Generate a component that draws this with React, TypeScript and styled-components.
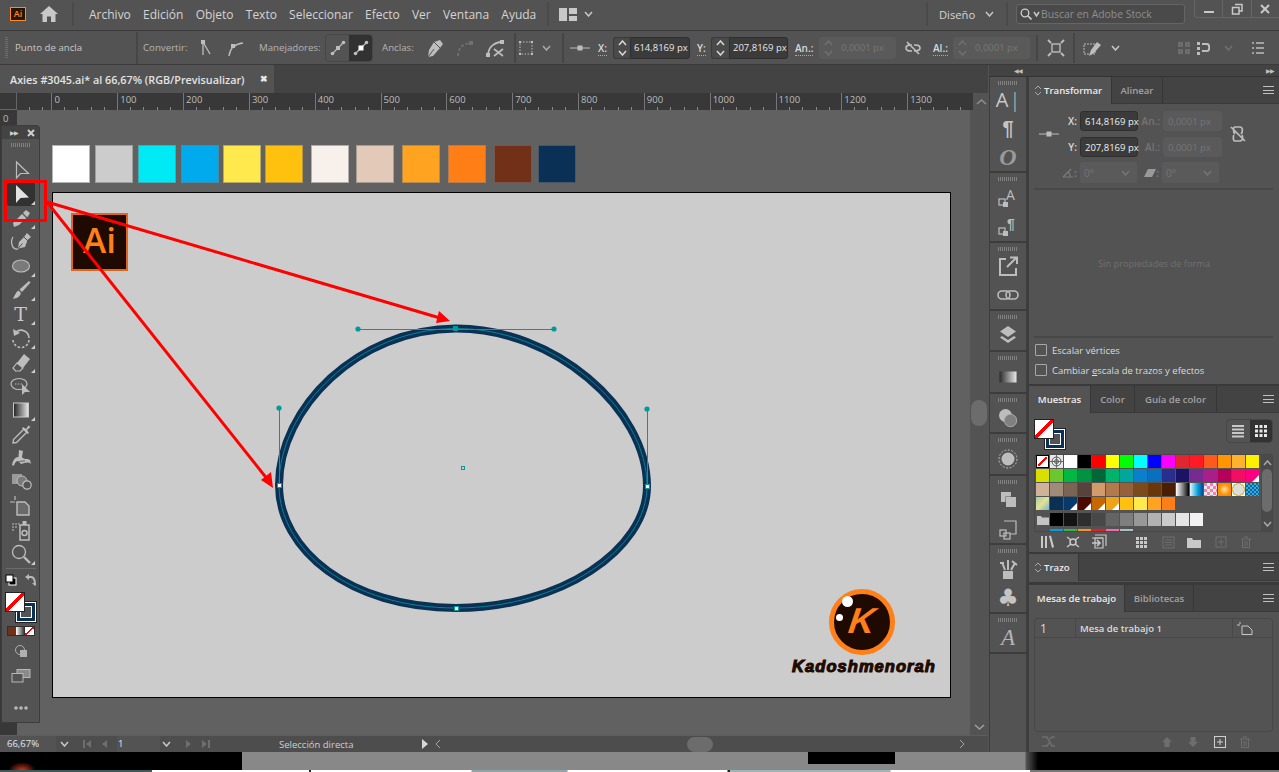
import React from "react";
import styled, { createGlobalStyle } from "styled-components";

const Global = createGlobalStyle`
  html, body { margin: 0; padding: 0; background: #000; overflow: hidden; }
  * { box-sizing: border-box; }
  #root { width: 1279px; height: 772px; }
`;

const FONT = `"Open Sans", "Noto Sans", sans-serif`;

const Screen = styled.div`
  position: relative; width: 1279px; height: 772px; overflow: hidden;
  display: flex; flex-direction: column; font-family: ${FONT}; font-size: 11px; color: #d6d6d6; background: #535353;
`;

/* ---------- generic icon parts ---------- */
const Ico = styled.svg<{ $c?: string }>`
  display: block; flex: none; color: ${(p) => p.$c || "#c4c4c4"};
`;
const I = ({ s = 24, h, c, v, children }: { s?: number; h?: number; c?: string; v?: string; children: React.ReactNode }) => (
  <Ico width={s} height={h || s} viewBox={v || `0 0 ${s} ${h || s}`} $c={c} fill="none" stroke="none">{children}</Ico>
);
const Slot = styled.div<{ $w: number }>`
  width: ${(p) => p.$w}px; flex: none; display: flex; align-items: center; justify-content: center; height: 100%;
`;
const Gap = styled.div<{ $w: number }>`
  width: ${(p) => p.$w}px; flex: none;
`;
const Chev = ({ c = "#c8c8c8", s = 9, up = false }: { c?: string; s?: number; up?: boolean }) => (
  <I s={s} h={6} c={c}><path d={up ? `M1 5 L${s / 2} 1 L${s - 1} 5` : `M1 1 L${s / 2} 5 L${s - 1} 1`} stroke="currentColor" strokeWidth="1.5" /></I>
);

/* ---------- menu bar ---------- */
const MenuBar = styled.div`
  height: 31px; flex: none; display: flex; align-items: center; background: #535353; border-bottom: 1px solid #3a3a3a; position: relative; padding-bottom: 2px;
`;
const AppLogo = styled.div`
  width: 16px; height: 14px; margin-left: 10px; background: #2a1400; border: 1px solid #ff8a1e; color: #ff8a1e;
  font-size: 9px; line-height: 12px; text-align: center; font-weight: 600; flex: none;
`;
const Divider = styled.div<{ $h?: number; $c?: string }>`
  width: 2px; flex: none; height: ${(p) => p.$h || 24}px; background: ${(p) => p.$c || "#4a4a4a"};
`;
const MenuList = styled.div`
  display: flex; gap: 12.2px; font-size: 12px; color: #d4d4d4; width: 456px; flex: none;
`;
const SearchBox = styled.div`
  width: 169px; height: 20px; flex: none; border: 1px solid #656565; border-radius: 3px; background: #4a4a4a; display: flex; align-items: center;
  padding-left: 3px; gap: 1px; font-size: 10.4px; color: #8e8e8e; white-space: nowrap;
`;
const WindowButtons = styled.div`
  position: absolute; left: 1194px; top: 0; width: 85px; height: 18px; display: flex; border: 1px solid #656565; border-top: 0; border-right: 0; border-bottom-left-radius: 3px;
`;
const WinBtn = styled.div`
  flex: 1; display: flex; align-items: center; justify-content: center; border-left: 1px solid #656565;
  &:first-child { border-left: 0; }
`;
const DesignLabel = styled.div`
  font-size: 11.2px; color: #d4d4d4; width: 43px; flex: none;
`;

/* ---------- control bar ---------- */
const ControlBar = styled.div`
  height: 34px; flex: none; display: flex; align-items: center; padding-left: 5px; background: #535353; border-bottom: 1px solid #3a3a3a;
`;
const GripV = styled.div`
  width: 3px; height: 22px; flex: none;
  background: repeating-linear-gradient(to bottom, #6d6d6d 0 1px, transparent 1px 2px);
`;
const CtlText = styled.div<{ $w: number; $dim?: boolean }>`
  width: ${(p) => p.$w}px; flex: none; font-size: 9.7px; color: ${(p) => (p.$dim ? "#b4b4b4" : "#c8c8c8")}; white-space: nowrap;
`;
const ScrubLabel = styled.div<{ $w: number }>`
  width: ${(p) => p.$w}px; flex: none; font-size: 10px; font-weight: 600; color: #d8d8d8; span { border-bottom: 1px dotted #aaa; }
`;
const HandleGroup = styled.div`
  width: 48px; height: 28px; flex: none; display: flex; border: 1px solid #464646; border-radius: 4px; overflow: hidden;
`;
const HandleBtn = styled.div<{ $on?: boolean }>`
  flex: 1; display: flex; align-items: center; justify-content: center; background: ${(p) => (p.$on ? "#323232" : "transparent")};
`;
const NumBox = styled.div<{ $w: number; $off?: boolean }>`
  width: ${(p) => p.$w}px; height: 22px; flex: none; display: flex; align-items: center;
  background: ${(p) => (p.$off ? "#5a5a5a" : "#3b3b3b")}; border: 1px solid ${(p) => (p.$off ? "#5a5a5a" : "#2f2f2f")};
  border-radius: 0 3px 3px 0; padding-left: 3px; font-size: 9.5px; white-space: nowrap;
  color: ${(p) => (p.$off ? "#777" : "#e8e8e8")};
`;
const Stepper = styled.div<{ $w: number; $off?: boolean }>`
  width: ${(p) => p.$w}px; height: 22px; flex: none; display: flex; flex-direction: column; align-items: center; justify-content: center; gap: 4px;
  background: ${(p) => (p.$off ? "#5a5a5a" : "#4a4a4a")}; border: 1px solid ${(p) => (p.$off ? "#5a5a5a" : "#3a3a3a")}; border-right: 0; border-radius: 3px 0 0 3px;
`;
const Step = ({ w, off }: { w: number; off?: boolean }) => (
  <Stepper $w={w} $off={off}><Chev up c={off ? "#707070" : "#d8d8d8"} /><Chev c={off ? "#707070" : "#d8d8d8"} /></Stepper>
);

/* ---------- workspace ---------- */
const Workspace = styled.div`
  flex: 1; min-height: 0; display: flex;
`;
const DocArea = styled.div`
  width: 988px; flex: none; display: flex; flex-direction: column;
`;
const TabRow = styled.div`
  height: 28px; flex: none; background: #434343; display: flex;
`;
const DocTab = styled.div`
  width: 274px; background: #535353; display: flex; align-items: center; padding-left: 10px; font-size: 10.8px; font-weight: 600; color: #e4e4e4; white-space: nowrap; position: relative;
`;
const CloseMark = styled.span`
  position: absolute; left: 260px; top: 7px; font-size: 9px; font-weight: 700; color: #e8e8e8;
`;
const RulerRow = styled.div`
  height: 17px; flex: none; display: flex; background: #383838;
`;
const RulerOrigin = styled.div`
  width: 17px; flex: none; height: 100%; position: relative; border-right: 1px solid #666; border-bottom: 1px solid #666;
`;
const RulerLead = styled.div`
  width: 34.4px; flex: none; background: repeating-linear-gradient(to right, transparent 0 12px, #8a8a8a 12px 13px) bottom left / 100% 3px no-repeat;
`;
const RulerCell = styled.div`
  width: 65.84px; flex: none; height: 100%; border-left: 1px solid #777; padding-left: 2px; font-size: 9.5px; line-height: 13px; color: #bdbdbd;
  background: repeating-linear-gradient(to right, transparent 0 12.17px, #8a8a8a 12.17px 13.17px) bottom left / 100% 3px no-repeat;
`;
const ScrollCorner = styled.div`
  width: 18px; flex: none; background: #535353; display: flex; align-items: center; justify-content: center;
`;
const CanvasRow = styled.div`
  flex: 1; min-height: 0; display: flex;
`;
const VRuler = styled.div`
  width: 17px; flex: none; background: #383838; font-size: 9.5px; padding: 2px 0 0 3px; color: #bdbdbd;
`;
const Canvas = styled.div`
  flex: 1; position: relative; background: #616161;
`;
const SwatchRow = styled.div`
  position: absolute; left: 35px; top: 35px; display: flex;
`;
const DocSwatch = styled.div<{ $c: string; $ml: number }>`
  width: 38px; height: 38px; margin-left: ${(p) => p.$ml}px; background: ${(p) => p.$c}; border: 1px solid rgba(120,120,120,.55);
`;
const Artboard = styled.div`
  position: absolute; left: 35px; top: 82px; width: 899px; height: 506px; background: #cccccc; border: 1px solid #000;
`;
const AiBadge = styled.div`
  position: absolute; left: 18px; top: 20px; width: 57px; height: 58px; background: #1e0a00; border: 2px solid #e0651f;
  color: #ff7f18; font-size: 35px; line-height: 50px; text-align: center; font-weight: 600;
`;
const KLogo = styled.div`
  position: absolute; left: 776px; top: 396px; width: 66px; height: 66px; border-radius: 50%; background: #1e0a00; border: 5px solid #ff7f18;
  color: #ff7f18; font: italic 700 36px/54px "Liberation Sans", sans-serif; text-align: center;
`;
const KGlyph = styled.span`
  display: inline-block; transform: skewX(-8deg);
`;
const KDot = styled.i<{ $x: number; $y: number; $d: number }>`
  position: absolute; left: ${(p) => p.$x}px; top: ${(p) => p.$y}px; width: ${(p) => p.$d}px; height: ${(p) => p.$d}px; border-radius: 50%; background: #fff;
`;
const KName = styled.div`
  position: absolute; left: 738px; top: 464px; width: 146px; text-align: center; color: #1e0a00; white-space: nowrap;
  font: italic 900 16.5px/18px "Liberation Sans", sans-serif; -webkit-text-stroke: 1.1px #1e0a00; letter-spacing: 1.05px;
`;
const VScroll = styled.div`
  width: 18px; flex: none; background: #535353; position: relative; display: flex; flex-direction: column; align-items: center; justify-content: flex-end; padding-bottom: 5px;
`;
const VThumb = styled.div`
  position: absolute; left: 1px; top: 290px; width: 16px; height: 26px; border-radius: 8px; background: #6c6c6c;
`;

/* ---------- status bar ---------- */
const StatusBar = styled.div`
  height: 17px; flex: none; display: flex; align-items: center; background: #4d4d4d; font-size: 9.5px; color: #d0d0d0; border-top: 1px solid #5d5d5d;
`;
const StatusField = styled.div<{ $w: number; $pad: number }>`
  width: ${(p) => p.$w}px; flex: none; height: 100%; background: #535353; padding-left: ${(p) => p.$pad}px; line-height: 16px; color: #e0e8f4; white-space: nowrap;
`;
const StatusMsg = styled.div`
  width: 197px; flex: none; padding-left: 60px; white-space: nowrap; color: #cfcfcf;
`;
const HThumb = styled.div`
  width: 26px; height: 15px; border-radius: 8px; background: #6c6c6c; flex: none;
`;

/* ---------- bottom strip ---------- */
const Bottom = styled.div`
  height: 20px; flex: none; position: relative; background: linear-gradient(to right, #000 0 242px, #888 242px 1025px, #555 1026px, #000 1038px);
`;
const BottomCut = styled.div`
  position: absolute; left: 808px; top: 0; width: 87px; height: 12px; background: #000;
`;
const BottomEdge = styled.div`
  position: absolute; left: 0; right: 0; bottom: 0; height: 2px;
  background: linear-gradient(to right, #3c5a58 0 152px, #fff 152px 309px, #222 309px 311px, #fff 311px 471px, #8fa5a8 472px 567px, #fff 568px 727px, #222 728px 730px, #9fb5b5 730px 890px, #fff 891px 1030px, #777 1030px 1279px);
`;
const Glow = styled.div`
  position: absolute; left: 8px; bottom: -8px; width: 28px; height: 18px; border-radius: 50%; background: radial-gradient(closest-side, #e53a1e, rgba(200,40,20,0));
`;

/* ---------- floating tool panel ---------- */
const ToolPanel = styled.div`
  position: absolute; left: 1px; top: 125px; width: 39px; height: 598px; background: #535353; border: 1px solid #3d3d3d; border-radius: 3px 3px 0 0; display: flex; flex-direction: column; align-items: center;
`;
const ToolHead = styled.div`
  width: 100%; height: 13px; flex: none; background: #434343; display: flex; align-items: center; justify-content: space-between; padding: 0 4px 0 8px; font-size: 6px; letter-spacing: -1px; color: #cfcfcf;
`;
const GripH = styled.div<{ $w?: number }>`
  width: ${(p) => p.$w || 20}px; height: 4px; flex: none;
  background: repeating-linear-gradient(to right, #808080 0 1px, transparent 1px 2px);
`;
const ToolGrip = styled(GripH)`
  margin: 4px 0 11px;
`;
const ToolBtn = styled.div<{ $on?: boolean; $corner?: boolean }>`
  width: 28px; height: 24px; flex: none; position: relative; display: flex; align-items: center; justify-content: center;
  border-radius: 3px; background: ${(p) => (p.$on ? "#323232" : "transparent")};
  ${(p) => p.$corner && `&::after { content: ""; position: absolute; right: 0; bottom: 1px; border-style: solid; border-width: 0 0 4px 4px; border-color: transparent transparent #cfcfcf transparent; }`}
`;
const TTool = styled.span`
  font: 400 19px/24px "DejaVu Serif", serif; color: #c9c9c9;
`;
const ToolSep = styled.div`
  width: 30px; height: 1px; background: #6b6b6b; flex: none; margin-top: 2px;
`;
const DefaultRow = styled.div`
  width: 31px; height: 19px; margin-top: 1px; flex: none; display: flex; align-items: center; justify-content: space-between;
`;
const MiniRow = styled.div`
  width: 28px; height: 10px; margin-top: 4px; display: flex; border: 1px solid #2f2f2f; flex: none;
`;
const MiniCell = styled.div<{ $bg: string }>`
  flex: 1; background: ${(p) => p.$bg};
`;
const NONE_BG2 = "linear-gradient(to top left, #fff 0 43%, #f00 43% 57%, #fff 57%)";
const FS = styled.div`
  position: relative; width: 31px; height: 30px; flex: none;
`;
const FSFill = styled.div`
  position: absolute; left: 0; top: 0; width: 20px; height: 20px; z-index: 1; border: 1px solid #222; background: linear-gradient(to bottom right, #fff 0 44%, #f00 44% 56%, #fff 56%);
`;
const FSStroke = styled.div`
  position: absolute; right: 0; bottom: 0; width: 20px; height: 20px; background: #0a3055; border: 1px solid #fff; display: flex; align-items: center; justify-content: center;
  outline: 1px solid #222; 
  &::after { content: ""; width: 10px; height: 10px; background: #535353; border: 1px solid #fff; }
`;
const FillStroke = () => (<FS><FSStroke /><FSFill /></FS>);
const FSWrap = styled.div`
  margin-top: 3px; flex: none;
`;
const ToolFoot = styled.div<{ $mt: number }>`
  margin-top: ${(p) => p.$mt}px; flex: none;
`;

/* ---------- dock ---------- */
const Dock = styled.div`
  width: 291px; flex: none; display: flex; flex-direction: column; background: #535353;
`;
const CollapseStrip = styled.div`
  height: 12px; flex: none; display: flex; align-items: center; justify-content: space-between; margin-left: 1px; padding: 0 5px 0 25px; background: #434343; border-bottom: 1px solid #333; color: #c0c0c0; font-size: 6px; letter-spacing: -1px;
`;
const DockBody = styled.div`
  flex: 1; min-height: 0; display: flex;
`;
const IconCol = styled.div`
  width: 40px; flex: none; display: flex; flex-direction: column; border-left: 1px solid #3d3d3d; border-right: 3px solid #3d3d3d; margin-left: 1px;
`;
const DockGroup = styled.div<{ $h?: number }>`
  height: ${(p) => (p.$h ? `${p.$h}px` : "auto")}; flex: ${(p) => (p.$h ? "none" : 1)}; border-bottom: 2px solid #3d3d3d; padding-top: 4px; display: flex; flex-direction: column; align-items: center;
  &:last-child { border-bottom: 0; }
`;
const DockGrip = styled(GripH)`
  margin-bottom: 1px;
`;
const DockBtn = styled.div`
  flex: 1; display: flex; align-items: center; justify-content: center; color: #c4c4c4; min-height: 0;
`;
const GlyphA = styled.span`
  font: 400 20px/24px ${FONT}; color: #c8c8c8; span { font-weight: 300; margin-left: 1px; }
`;
const GlyphP = styled.span`
  font: 700 20px/24px "Liberation Sans", sans-serif; color: #c4c4c4;
`;
const GlyphO = styled.span`
  font: italic 700 24px/24px "Liberation Serif", serif; color: #9a9a9a;
`;
const GlyphClub = styled.span`
  font: 400 24px/24px "DejaVu Sans", sans-serif; color: #c4c4c4;
`;
const GlyphScript = styled.span`
  font: italic 400 23px/24px "Liberation Serif", serif; color: #b4b4b4;
`;
const PanelsCol = styled.div`
  width: 250px; flex: none; display: flex; flex-direction: column; background: #3a3a3a;
`;
const Panel = styled.div<{ $h: number; $mb?: number }>`
  height: ${(p) => p.$h}px; flex: none; margin-bottom: ${(p) => p.$mb || 0}px; background: #535353; display: flex; flex-direction: column;
`;
const TabBar = styled.div`
  height: 27px; flex: none; display: flex; background: #434343; position: relative; border-bottom: 1px solid #3a3a3a;
`;
const PTab = styled.div<{ $w: number; $on?: boolean; $left?: boolean }>`
  width: ${(p) => p.$w}px; flex: none; height: ${(p) => (p.$on ? "27px" : "26px")}; display: flex; align-items: center; justify-content: ${(p) => (p.$left ? "flex-start" : "center")}; padding-left: ${(p) => (p.$left ? 5 : 0)}px; gap: 2px; font-size: 9.6px; font-weight: 600; white-space: nowrap;
  background: ${(p) => (p.$on ? "#535353" : "transparent")}; color: ${(p) => (p.$on ? "#ececec" : "#a2a2a2")}; border-right: 1px solid #363636;
`;
const Burger = styled.div`
  position: absolute; right: 5px; top: 9px; width: 11px; height: 8px; border-top: 1px solid #c0c0c0; border-bottom: 1px solid #c0c0c0;
  &::after { content: ""; display: block; height: 1px; margin-top: 2.5px; background: #c0c0c0; }
`;
const UpDown = () => (
  <I s={8} h={11} c="#aaa"><path d="M1 4 L4 1 L7 4 M1 7 L4 10 L7 7" stroke="currentColor" /></I>
);
const XformGrid = styled.div`
  display: grid; grid-template-columns: 27px 15px 58px 25px 59px 38px; grid-template-rows: 20px 20px; row-gap: 6px; margin: 7px 0 0 6px; align-items: center; flex: none;
`;
const XLabel = styled.div<{ $off?: boolean }>`
  font-size: 10px; font-weight: 600; text-align: right; color: ${(p) => (p.$off ? "#757575" : "#d8d8d8")};
`;
const XBox = styled.div<{ $off?: boolean }>`
  height: 20px; margin: 0 -3px 0 3px; border-radius: 3px; display: flex; align-items: center; padding-left: 4px; font-size: 9.5px; white-space: nowrap;
  background: ${(p) => (p.$off ? "#5a5a5a" : "#3b3b3b")}; border: 1px solid ${(p) => (p.$off ? "#5a5a5a" : "#2f2f2f")}; color: ${(p) => (p.$off ? "#757575" : "#f0f0f0")};
`;
const SpanCell = styled.div<{ $col: number }>`
  grid-row: 1 / span 2; grid-column: ${(p) => p.$col}; display: flex; justify-content: center; align-items: center;
`;
const AngleRow = styled.div`
  display: flex; align-items: center; margin: 5px 0 0 33px; height: 21px; flex: none;
`;
const AngleSelect = styled.div`
  width: 57px; height: 21px; flex: none; background: #5a5a5a; border-radius: 2px; color: #757575; font-size: 10px; display: flex; align-items: center; justify-content: space-between; padding: 0 7px 0 4px;
`;
const AngleColon = styled.span`
  color: #777; font-weight: 700; width: 6px; flex: none;
`;
const HLine = styled.div<{ $mt: number }>`
  height: 2px; margin: ${(p) => p.$mt}px 6px 0 5px; background: #484848; flex: none;
`;
const NoProps = styled.div`
  height: 146px; flex: none; display: flex; align-items: center; justify-content: center; color: #707070; font-size: 9.3px;
`;
const CheckList = styled.div`
  margin-top: 2px; flex: none;
`;
const CheckRow = styled.div`
  display: flex; align-items: center; gap: 5px; height: 20px; margin-left: 6px; font-size: 9.5px; color: #dcdcdc;
  u { text-decoration-thickness: 1px; }
`;
const CheckBox = styled.span`
  width: 12px; height: 12px; border: 1px solid #a8a8a8; border-radius: 1px; flex: none;
`;

const SwatchTop = styled.div`
  height: 41px; flex: none; display: flex; justify-content: space-between; padding: 6px 6px 0 5px;
`;
const ViewToggle = styled.div`
  width: 47px; height: 24px; flex: none; display: flex; border: 1px solid #464646; border-radius: 4px; overflow: hidden;
`;
const ViewBtn = styled.div<{ $on?: boolean }>`
  flex: 1; display: flex; align-items: center; justify-content: center; background: ${(p) => (p.$on ? "#323232" : "transparent")};
`;
const SwatchBox = styled.div`
  height: 78px; margin: 0 6px 0 5px; flex: none; display: flex; border: 1px solid #484848; overflow: hidden; padding: 0 0 0 1px; border-radius: 2px;
`;
const SwatchInner = styled.div`
  width: 225px; flex: none; display: flex; flex-direction: column;
`;
const SwatchLine = styled.div<{ $mt?: number; $pl?: number }>`
  display: flex; flex: none; height: 14px; margin-top: ${(p) => p.$mt || 0}px; padding-left: ${(p) => p.$pl || 0}px; position: relative;
`;
const Cell = styled.div<{ $bg: string; $corner?: boolean }>`
  width: 13px; height: 13px; margin-right: 1px; flex: none; background: ${(p) => p.$bg}; position: relative;
  ${(p) => p.$corner && `&::after { content: ""; position: absolute; right: 0; bottom: 0; border-style: solid; border-width: 0 0 7px 7px; border-color: transparent transparent #fff transparent; }`}
`;
const NoneCell = styled(Cell)`
  border: 1px solid #000; outline: 1px solid #fff; outline-offset: -2px;
`;
const FolderAt = styled.div`
  position: absolute; left: 1px; top: 2px;
`;
const Tiny = styled.div<{ $bg: string }>`
  width: 13px; height: 3px; margin-right: 1px; flex: none; background: ${(p) => p.$bg};
`;
const SwatchScroll = styled.div`
  width: 12px; flex: none; display: flex; flex-direction: column; align-items: center; background: #4a4a4a; padding-top: 5px;
`;
const SwatchThumb = styled.div`
  width: 10px; height: 43px; border-radius: 5px; background: #6c6c6c; margin: 3px 0 9px;
`;
const IconStrip = styled.div<{ $h: number }>`
  height: ${(p) => p.$h}px; flex: none; display: flex; align-items: center; padding-left: 7px;
`;
const BoardTable = styled.div`
  height: 114px; margin: 6px 6px 0 5px; flex: none; border: 1px solid #484848; border-radius: 3px; display: flex; flex-direction: column;
`;
const BoardHead = styled.div`
  height: 19px; flex: none; display: flex; align-items: center; border-bottom: 1px solid #484848; color: #dcdcdc;
`;
const BoardCol = styled.div<{ $w: number; $big?: boolean }>`
  width: ${(p) => p.$w}px; height: 100%; flex: none; display: flex; align-items: center; padding-left: ${(p) => (p.$big ? 5 : 4)}px; border-right: 1px solid #484848; font-size: ${(p) => (p.$big ? "12px" : "9.5px")};
  font-weight: ${(p) => (p.$big ? 400 : 600)};
  &:last-child { border-right: 0; }
`;

/* ---------- data ---------- */
const docSwatches: [string, number][] = [
  ["#ffffff", 0], ["#cccccc", 5], ["#00eaf5", 4.5], ["#00aaec", 5.5], ["#ffe94d", 4], ["#ffc10e", 4], ["#f7f0eb", 8], ["#e3c9b8", 7],
  ["#ffa320", 8], ["#ff7e16", 8], ["#733018", 8], ["#0a3055", 6],
];
const row1 = ["#ffffff", "#000000", "#ff0000", "#ffff00", "#00ff00", "#00ffff", "#0000ff", "#ff00ff", "#e12531", "#ff1a25", "#ff5a1e", "#ff9500", "#ffb22e", "#fff000"];
const row2 = ["#d9e000", "#6cc72f", "#00b843", "#009240", "#006837", "#00b36b", "#00a79d", "#0a80cc", "#0a6fbc", "#2a2f8f", "#1b1464", "#772a90", "#a81f8a", "#b5005a", "#f00f62"];
const row3 = ["#d0b298", "#a08a78", "#7a6454", "#574339", "#d19b6a", "#b27a4a", "#95603a", "#7d4a1c", "#693708", "#4a1e04"];
const row3b = [
  "linear-gradient(to right,#fff,#888 50%,#000)",
  "linear-gradient(to right,#e8f4fc,#00a0e0 60%,#004a90)",
  "repeating-conic-gradient(#e8e8e8 0 25%, #f080b0 0 50%) 0 0 / 6px 6px",
  "radial-gradient(circle,#ffe0a0,#ff9000 60%,#ff7e16)",
  "radial-gradient(circle,#ddd 0 55%,#e0c040 60% 70%,#fff 72%)",
  "repeating-conic-gradient(#0a6aa0 0 25%, #3aa8d8 0 50%) 0 0 / 4px 4px",
];
const row4: [string, boolean][] = [
  ["linear-gradient(135deg,#9ad0b0,#e8e090 50%,#70b8d8)", false], ["#0a3055", false], ["#07396d", true], ["#4a0a00", true], ["#c56800", true], ["#eda41a", true],
  ["#ffc10e", false], ["#ffe94d", false], ["#ffa320", false], ["#ff7e16", false],
];
const grays = ["#000000", "#131313", "#2e2e2e", "#484848", "#646464", "#7e7e7e", "#989898", "#b2b2b2", "#cbcbcb", "#e6e6e6", "#f2f2f2"];
const tiny = ["#00a0e8", "#39b54a", "#f7931e", "#ed1c24", "#f06eaa", "#a9c0c8"];
const rulerLabels = [0, 100, 200, 300, 400, 500, 600, 700, 800, 900, 1000, 1100, 1200, 1300];
const menus = ["Archivo", "Edición", "Objeto", "Texto", "Seleccionar", "Efecto", "Ver", "Ventana", "Ayuda"];

/* ---------- tool icons ---------- */
const G = "#bdbdbd";
const toolIcons: { el: React.ReactNode; corner?: boolean; on?: boolean }[] = [
  { el: <I c={G}><path d="M7.5 4 L7.5 20 L11.5 15.5 L19.5 15.5 Z" stroke="currentColor" strokeWidth="1.2" /></I> },
  { on: true, corner: true, el: <I c="#e2e2e2"><path d="M7 3 L7 21 L11.5 16 L20 15.5 Z" fill="currentColor" /></I> },
  { corner: true, el: <I c={G}><path d="M14 7 L17 4 L21 7 L18.5 11 L10 19 L5 21 L4 17 Z" fill="currentColor" /><path d="M13 7 L18 12" stroke="#535353" strokeWidth="1.2" /></I> },
  { el: <I c={G}><path d="M15 7 L18 3 L22 7 L18.5 10 L16 17 L9 18.5 L10 12 Z" fill="currentColor" /><path d="M9.5 18 L13.5 13.5" stroke="#535353" /><path d="M14 6 L19 11" stroke="#535353" /><path d="M4 7 C1 12 3 20 9 19" stroke="currentColor" strokeWidth="1.3" /></I> },
  { corner: true, el: <I c={G}><ellipse cx="12" cy="12" rx="8.5" ry="6" fill="#7a7a7a" stroke="currentColor" strokeWidth="1.1" /></I> },
  { corner: true, el: <I c={G}><path d="M20 3 L21.5 4.5 L13 14 L10.5 11.5 Z" fill="currentColor" /><path d="M9.5 12.5 L12 15 C11 19 7 21 3.5 20.5 C6 18.5 6.5 14 9.5 12.5 Z" fill="currentColor" /></I> },
  { corner: true, el: <TTool>T</TTool> },
  { corner: true, el: <I c={G}><path d="M7 6 A8 8 0 0 1 20 12" stroke="currentColor" strokeWidth="1.6" /><path d="M20 14 A8 8 0 0 1 4 13" stroke="currentColor" strokeWidth="1.6" strokeDasharray="2.5 1.8" /><path d="M4 3 L5 10 L11 7 Z" fill="currentColor" /></I> },
  { corner: true, el: <I c={G}><path d="M15 4 L21 9 L14 18 L8 13 Z" fill="currentColor" /><path d="M8 13 L14 18 L11 21 L6.5 21 L4 18 Z" fill="#535353" stroke="currentColor" strokeWidth="1.2" /></I> },
  { el: <I c={G}><ellipse cx="10" cy="10" rx="8" ry="5.5" stroke="currentColor" strokeWidth="1.2" /><path d="M6 10 H13" stroke="currentColor" strokeDasharray="1.4 1.4" /><path d="M13 10 L13 21 L16 18 L21 18 Z" fill="currentColor" /></I> },
  { corner: true, el: <I><defs><linearGradient id="tg" x1="0" x2="1"><stop offset="0" stopColor="#222" /><stop offset="1" stopColor="#e8e8e8" /></linearGradient></defs><rect x="4.5" y="5" width="15" height="14" fill="url(#tg)" stroke="#c8c8c8" /></I> },
  { el: <I c={G}><path d="M4 21 L4.5 17.5 L15 7 L18 10 L7.5 20.5 Z" stroke="currentColor" strokeWidth="1.4" /><path d="M14 5 L17 7 L19.5 3.5 L21.5 5 L18 8 L20 11 L18.5 12 L13 6.5 Z" fill="currentColor" /></I> },
  { el: <I c={G}><path d="M3 19 C6 22 5 15 9 15 L12 18 C16 17 19 15 22 18 L21 14 C18 12 15 14 13 11 L14 5 L10 4 L9.5 11 C6 11 4 14 3 19 Z" fill="currentColor" /><path d="M7 18 C10 15 13 15 16 15" stroke="#535353" /></I> },
  { el: <I c={G}><rect x="3" y="4" width="10" height="10" fill="#9a9a9a" /><circle cx="13" cy="11" r="5" fill="#7a7a7a" stroke="currentColor" /><circle cx="18" cy="15" r="4.2" fill="#535353" stroke="currentColor" strokeWidth="1.2" /></I> },
  { el: <I c={G}><path d="M8 8 H16 L20 12 V21 H8 Z" stroke="currentColor" strokeWidth="1.4" fill="#6a6a6a" /><path d="M1 8 H6 M6 2 V6" stroke="currentColor" strokeWidth="1.2" /></I> },
  { el: <I c={G}><rect x="11" y="7" width="9" height="15" stroke="currentColor" strokeWidth="1.5" /><circle cx="15.5" cy="15" r="2.5" stroke="currentColor" strokeWidth="1.5" /><rect x="13.5" y="3" width="4" height="4" fill="currentColor" /><path d="M3 5 h2 v2 h-2z M6 5 h2 v2 h-2z M9 5 h2 v2 h-2z M3 8 h2 v2 h-2z M6 8 h2 v2 h-2z M3 11 h2 v2 h-2z" fill="#8a8a8a" /></I> },
  { corner: true, el: <I c={G}><circle cx="10" cy="10" r="6.5" stroke="currentColor" strokeWidth="1.3" /><path d="M15 15 L21 21" stroke="currentColor" strokeWidth="2.4" /></I> },
];

/* ---------- main ---------- */
export default function App() {
  return (
    <Screen>
      <Global />
      <MenuBar>
        <AppLogo>Ai</AppLogo>
        <Gap $w={14} />
        <I s={18} h={16} c="#c8c8c8"><path d="M9 0 L0 8 H2.5 V16 H7 V10.5 H11 V16 H15.5 V8 H18 Z" fill="currentColor" /></I>
        <Gap $w={14} />
        <Divider />
        <Gap $w={15} />
        <MenuList>{menus.map((m) => <span key={m}>{m}</span>)}</MenuList>
        <Gap $w={2} />
        <Divider />
        <Gap $w={10} />
        <I s={18} h={13} c="#c8c8c8"><path d="M0 0 H8 V13 H0 Z M10 0 H18 V6 H10 Z M10 8 H18 V13 H10 Z" fill="currentColor" /></I>
        <Gap $w={7} />
        <Chev />
        <Gap $w={333} />
        <Divider />
        <Gap $w={11} />
        <DesignLabel>Diseño</DesignLabel>
        <Gap $w={3} />
        <Chev />
        <Gap $w={12} />
        <Divider />
        <Gap $w={8} />
        <SearchBox>
          <I s={12} c="#d0d0d0"><circle cx="5" cy="5" r="3.8" stroke="currentColor" strokeWidth="1.3" /><path d="M8 8 L11.5 11.5" stroke="currentColor" strokeWidth="1.6" /></I>
          <Chev s={7} />
          <span>Buscar en Adobe Stock</span>
        </SearchBox>
        <WindowButtons>
          <WinBtn><I s={12} c="#c8c8c8"><rect x="1" y="8" width="10" height="2" fill="currentColor" /></I></WinBtn>
          <WinBtn><I s={12} c="#c8c8c8"><path d="M4 1.5 H11 V8 H8.5 M1.5 4.5 H8 V11 H1.5 Z" stroke="currentColor" strokeWidth="1.5" /></I></WinBtn>
          <WinBtn><I s={12} c="#c8c8c8"><path d="M2 2 L10 10 M10 2 L2 10" stroke="currentColor" strokeWidth="2" /></I></WinBtn>
        </WindowButtons>
      </MenuBar>

      <ControlBar>
        <GripV />
        <Gap $w={7} />
        <CtlText $w={121}>Punto de ancla</CtlText>
        <Divider $h={32} $c="#464646" />
        <Gap $w={5} />
        <CtlText $w={50} $dim>Convertir:</CtlText>
        <Slot $w={24}><I c={G}><path d="M10 6 L17 18" stroke="currentColor" strokeWidth="1.3" /><path d="M10 7 L10 19" stroke="currentColor" strokeWidth="1.3" /><rect x="8" y="4" width="4" height="4" fill="currentColor" /></I></Slot>
        <Gap $w={6} />
        <Slot $w={24}><I c={G}><path d="M6 20 C7 12 11 8 20 7" stroke="currentColor" strokeWidth="1.4" /><rect x="8" y="8" width="4" height="4" fill="currentColor" /></I></Slot>
        <Gap $w={12} />
        <CtlText $w={66} $dim>Manejadores:</CtlText>
        <HandleGroup>
          <HandleBtn><I s={18} c={G}><path d="M3 15 L15 3" stroke="currentColor" strokeWidth="1.2" /><circle cx="3.5" cy="14.5" r="1.8" fill="currentColor" /><circle cx="14.5" cy="3.5" r="1.8" fill="currentColor" /><rect x="7" y="7" width="4" height="4" fill="currentColor" /></I></HandleBtn>
          <HandleBtn $on><I s={18} c={G}><path d="M3 15 L15 3" stroke="currentColor" strokeWidth="1.2" /><circle cx="3.5" cy="14.5" r="1.8" fill="currentColor" /><circle cx="14.5" cy="3.5" r="1.8" fill="currentColor" /><rect x="6.5" y="6.5" width="5" height="5" fill="#fff" /></I></HandleBtn>
        </HandleGroup>
        <Gap $w={9} />
        <CtlText $w={39} $dim>Anclas:</CtlText>
        <Slot $w={24}><I c={G}><path d="M13 6 L19 4 L22 8 L19 12 L12 20 L7 21 L8 14 Z" fill="currentColor" /><path d="M7 21 L13 13 M12 5 L20 13" stroke="#535353" /></I></Slot>
        <Gap $w={7} />
        <Slot $w={24}><I c="#707070"><path d="M6 20 C6 13 10 8 18 7" stroke="currentColor" strokeWidth="1.8" strokeDasharray="3 2" /><rect x="17" y="5" width="4" height="4" fill="currentColor" /></I></Slot>
        <Gap $w={7} />
        <Slot $w={24}><I c={G}><path d="M5 20 C5 12 10 7 18 6" stroke="currentColor" strokeWidth="1.8" /><rect x="3" y="17" width="4" height="4" fill="currentColor" /><rect x="17" y="4" width="4" height="4" fill="currentColor" /><path d="M11 13 L20 20 M20 13 L11 20" stroke="currentColor" strokeWidth="1.6" /></I></Slot>
        <Gap $w={7} />
        <Divider $h={30} $c="#464646" />
        <Slot $w={20}><I s={16} c={G}><rect x="2" y="2" width="12" height="12" stroke="currentColor" strokeDasharray="1.5 1.5" /><rect x="1" y="1" width="2" height="2" fill="currentColor" /><rect x="13" y="1" width="2" height="2" fill="currentColor" /><rect x="1" y="13" width="2" height="2" fill="currentColor" /><rect x="13" y="13" width="2" height="2" fill="currentColor" /></I></Slot>
        <Slot $w={20}><Chev c="#aaa" /></Slot>
        <Gap $w={6} />
        <Divider $h={30} $c="#464646" />
        <Gap $w={6} />
        <Slot $w={20}><I s={20} h={8} c={G}><path d="M0 4 H20" stroke="currentColor" /><rect x="7.5" y="1.5" width="5" height="5" fill="currentColor" /></I></Slot>
        <Gap $w={8} />
        <ScrubLabel $w={15}><span>X:</span></ScrubLabel>
        <Step w={17} />
        <NumBox $w={60}>614,8169 px</NumBox>
        <Gap $w={7} />
        <ScrubLabel $w={14}><span>Y:</span></ScrubLabel>
        <Step w={18} />
        <NumBox $w={59}>207,8169 px</NumBox>
        <Gap $w={7} />
        <ScrubLabel $w={24}><span>An.:</span></ScrubLabel>
        <Step w={18} off />
        <NumBox $w={59} $off>0,0001 px</NumBox>
        <Slot $w={34}><I s={16} c="#bdbdbd"><path d="M1 8 C1 5 4 5 7 5 M9 11 C12 11 15 11 15 8 C15 5 12 5 9 5 M7 11 C4 11 1 11 1 8 M2 2 L14 14" stroke="currentColor" strokeWidth="1.7" /></I></Slot>
        <Gap $w={3} />
        <ScrubLabel $w={20}><span>Al.:</span></ScrubLabel>
        <Step w={18} off />
        <NumBox $w={59} $off>0,0001 px</NumBox>
        <Gap $w={6} />
        <Divider $h={26} $c="#464646" />
        <Slot $w={35}><I s={18} c={G}><rect x="5" y="5" width="8" height="8" stroke="currentColor" strokeWidth="1.4" /><path d="M1 1 L4 4 M17 1 L14 4 M1 17 L4 14 M17 17 L14 14" stroke="currentColor" strokeWidth="1.8" /></I></Slot>
        <Divider $h={30} $c="#464646" />
        <Slot $w={34}><I s={20} c={G}><rect x="2" y="6" width="11" height="10" stroke="currentColor" strokeDasharray="2 1" /><path d="M7 18 L9 12 L15 4 L19 7 L12 15 Z" fill="currentColor" /></I></Slot>
        <Slot $w={12}><Chev /></Slot>
        <Gap $w={54} />
        <Slot $w={18}><I s={14} c="#6c6c6c"><path d="M1 1 H6 V6 H1 Z M8 1 H13 V6 H8 Z M1 8 H6 V13 H1 Z M8 8 H13 V13 H8 Z" fill="currentColor" /></I></Slot>
        <Gap $w={1} />
        <Slot $w={18}><I s={14} c="#bdbdbd"><path d="M1 1 H4 V4 H1 Z M1 6 H4 V9 H1 Z M1 11 H4 V14 H1 Z" fill="currentColor" /><path d="M6 3 H11 C14 3 14 10 11 10 H6" stroke="currentColor" strokeWidth="2" /></I></Slot>
        <Gap $w={10} />
        <Slot $w={12}><Chev c="#707070" /></Slot>
        <Gap $w={15} />
        <Slot $w={18}><I s={14} c="#bdbdbd"><path d="M1 2 H3 M5 2 H13 M1 7 H3 M5 7 H13 M1 12 H3 M5 12 H13" stroke="currentColor" strokeWidth="1.5" /></I></Slot>
      </ControlBar>

      <Workspace>
        <DocArea>
          <TabRow>
            <DocTab>Axies #3045.ai* al 66,67% (RGB/Previsualizar)<CloseMark>✖</CloseMark></DocTab>
          </TabRow>
          <RulerRow>
            <RulerOrigin />
            <RulerLead />
            {rulerLabels.map((n) => <RulerCell key={n}>{n}</RulerCell>)}
            <ScrollCorner><Chev c="#909090" s={11} up /></ScrollCorner>
          </RulerRow>
          <CanvasRow>
            <VRuler>0</VRuler>
            <Canvas>
              <SwatchRow>{docSwatches.map(([c, ml]) => <DocSwatch key={c} $c={c} $ml={ml} />)}</SwatchRow>
              <Artboard>
                <AiBadge>Ai</AiBadge>
                <KLogo><KGlyph>K</KGlyph><KDot $x={8} $y={2} $d={11} /><KDot $x={2} $y={20} $d={7} /></KLogo>
                <KName>Kadoshmenorah</KName>
              </Artboard>
            </Canvas>
            <VScroll><VThumb /><Chev c="#a0a0a0" s={11} /></VScroll>
          </CanvasRow>
          <StatusBar>
            <StatusField $w={56} $pad={7}>66,67%</StatusField>
            <Slot $w={17}><Chev /></Slot>
            <Gap $w={5} />
            <Slot $w={17}><I s={10} c="#6e6e6e"><path d="M1 1 H3 V9 H1 Z M9 1 L4 5 L9 9 Z" fill="currentColor" /></I></Slot>
            <Slot $w={17}><I s={10} c="#6e6e6e"><path d="M8 1 L3 5 L8 9 Z" fill="currentColor" /></I></Slot>
            <Gap $w={5} />
            <StatusField $w={43} $pad={1}>1</StatusField>
            <Slot $w={13}><Chev /></Slot>
            <Gap $w={7} />
            <Slot $w={17}><I s={10} c="#6e6e6e"><path d="M2 1 L7 5 L2 9 Z" fill="currentColor" /></I></Slot>
            <Slot $w={17}><I s={10} c="#6e6e6e"><path d="M1 1 L6 5 L1 9 Z M7 1 H9 V9 H7 Z" fill="currentColor" /></I></Slot>
            <Gap $w={5} />
            <StatusMsg>Selección directa</StatusMsg>
            <Gap $w={2} />
            <Slot $w={14}><I s={8} h={10} c="#d8d8d8"><path d="M1 0 L7 5 L1 10 Z" fill="currentColor" /></I></Slot>
            <Slot $w={12}><I s={6} h={10} c="#a0a0a0"><path d="M5 1 L1 5 L5 9" stroke="currentColor" /></I></Slot>
            <Gap $w={243} />
            <HThumb />
            <Gap $w={246} />
            <Slot $w={6}><I s={6} h={10} c="#a0a0a0"><path d="M1 1 L5 5 L1 9" stroke="currentColor" /></I></Slot>
          </StatusBar>
        </DocArea>

        <Dock>
          <CollapseStrip><span>◀◀</span><span>▶▶</span></CollapseStrip>
          <DockBody>
            <IconCol>
              <DockGroup $h={96}>
                <DockGrip />
                <DockBtn><GlyphA>A<span>|</span></GlyphA></DockBtn>
                <DockBtn><GlyphP>¶</GlyphP></DockBtn>
                <DockBtn><GlyphO>O</GlyphO></DockBtn>
              </DockGroup>
              <DockGroup $h={70}>
                <DockGrip />
                <DockBtn><I c={G}><rect x="3" y="14" width="6" height="6" stroke="currentColor" strokeWidth="1.2" /><rect x="7" y="17" width="5" height="5" fill="currentColor" /><text x="10" y="15" fontFamily="Open Sans" fontSize="14" fill="currentColor">A</text></I></DockBtn>
                <DockBtn><I c={G}><rect x="3" y="14" width="6" height="6" stroke="currentColor" strokeWidth="1.2" /><rect x="7" y="17" width="5" height="5" fill="currentColor" /><text x="11" y="15" fontFamily="Liberation Sans" fontWeight="700" fontSize="14" fill="currentColor">¶</text></I></DockBtn>
              </DockGroup>
              <DockGroup $h={68}>
                <DockGrip />
                <DockBtn><I c={G}><path d="M10 5 H4 V21 H20 V14" stroke="currentColor" strokeWidth="2" /><path d="M11 13 L20 4 M14 3.5 H21 V10" stroke="currentColor" strokeWidth="2" /></I></DockBtn>
                <DockBtn><I c={G}><rect x="2" y="8" width="12" height="8" rx="4" stroke="currentColor" strokeWidth="1.6" /><rect x="10" y="8" width="12" height="8" rx="4" stroke="currentColor" strokeWidth="1.6" /></I></DockBtn>
              </DockGroup>
              <DockGroup $h={41}>
                <DockGrip />
                <DockBtn><I c={G}><path d="M12 3 L20 8.5 L12 14 L4 8.5 Z" fill="currentColor" /><path d="M6 13 L12 17 L18 13 L20 14.5 L12 20 L4 14.5 Z" fill="currentColor" /></I></DockBtn>
              </DockGroup>
              <DockGroup $h={42}>
                <DockGrip />
                <DockBtn><I><defs><linearGradient id="dg" x1="0" x2="1"><stop offset="0" stopColor="#2a2a2a" /><stop offset="1" stopColor="#e8e8e8" /></linearGradient></defs><rect x="3.5" y="6.5" width="17" height="11" fill="url(#dg)" /></I></DockBtn>
              </DockGroup>
              <DockGroup $h={40}>
                <DockGrip />
                <DockBtn><I c={G}><circle cx="9.5" cy="9.5" r="6.5" fill="currentColor" /><circle cx="14.5" cy="14.5" r="6.2" fill="#808080" stroke="#aaa" /></I></DockBtn>
              </DockGroup>
              <DockGroup $h={42}>
                <DockGrip />
                <DockBtn><I c={G}><circle cx="12" cy="12" r="6.5" fill="currentColor" /><circle cx="12" cy="12" r="9" stroke="currentColor" strokeDasharray="2 1.5" /></I></DockBtn>
              </DockGroup>
              <DockGroup $h={69}>
                <DockGrip />
                <DockBtn><I c={G}><rect x="5" y="4" width="10" height="10" fill="currentColor" /><rect x="9.5" y="8.5" width="5.5" height="5.5" fill="#535353" /><rect x="10" y="9" width="10" height="10" fill="currentColor" /></I></DockBtn>
                <DockBtn><I c={G}><path d="M8 4 H20 V17 H14" stroke="currentColor" strokeWidth="1.2" /><rect x="4" y="13" width="6" height="6" stroke="currentColor" strokeWidth="1.2" /><rect x="8" y="16" width="6" height="6" stroke="currentColor" strokeWidth="1.2" /></I></DockBtn>
              </DockGroup>
              <DockGroup $h={69}>
                <DockGrip />
                <DockBtn><I c={G}><path d="M7 14 H17 V22 H7 Z" fill="currentColor" /><path d="M9 13 L6 5 M12 13 V3 M15 13 L19 6 M4 6 L8 6 M16 4 L21 8" stroke="currentColor" strokeWidth="2" /></I></DockBtn>
                <DockBtn><GlyphClub>♣</GlyphClub></DockBtn>
              </DockGroup>
              <DockGroup $h={40}>
                <DockGrip />
                <DockBtn><GlyphScript>A</GlyphScript></DockBtn>
              </DockGroup>
              <DockGroup />
            </IconCol>

            <PanelsCol>
              <Panel $h={307} $mb={2}>
                <TabBar>
                  <PTab $w={83} $on $left><UpDown />Transformar</PTab>
                  <PTab $w={51}>Alinear</PTab>
                  <Burger />
                </TabBar>
                <XformGrid>
                  <SpanCell $col={1}><I s={20} h={8} c={G}><path d="M0 4 H20" stroke="currentColor" /><rect x="7.5" y="1.5" width="5" height="5" fill="currentColor" /></I></SpanCell>
                  <XLabel>X:</XLabel>
                  <XBox>614,8169 px</XBox>
                  <XLabel $off>An.:</XLabel>
                  <XBox $off>0,0001 px</XBox>
                  <SpanCell $col={6}><I s={18} c="#bdbdbd"><path d="M6 2 H11 C14 2 14 7 12 9 M6 16 H11 C14 16 14 11 13 10 M6 2 C4 2 4 7 6 9 M6 16 C4 16 4 11 5 10 M2 2 L16 16" stroke="currentColor" strokeWidth="1.7" /></I></SpanCell>
                  <XLabel>Y:</XLabel>
                  <XBox>207,8169 px</XBox>
                  <XLabel $off>Al.:</XLabel>
                  <XBox $off>0,0001 px</XBox>
                </XformGrid>
                <AngleRow>
                  <I s={12} c="#7a7a7a"><path d="M1 10 L9 2 M1 10 H11 M6 5 C8 6 8 8 8 10" stroke="currentColor" strokeWidth="1.2" /></I>
                  <AngleColon>:</AngleColon>
                  <AngleSelect>0°<Chev c="#757575" /></AngleSelect>
                  <Gap $w={7} />
                  <I s={12} c="#9a9a9a"><path d="M4 2 H12 L8 10 H0 Z" fill="currentColor" /></I>
                  <AngleColon>:</AngleColon>
                  <AngleSelect>0°<Chev c="#757575" /></AngleSelect>
                </AngleRow>
                <HLine $mt={5} />
                <NoProps>Sin propiedades de forma</NoProps>
                <HLine $mt={0} />
                <CheckList>
                  <CheckRow><CheckBox />Escalar vértices</CheckRow>
                  <CheckRow><CheckBox /><span>Cambiar <u>e</u>scala de trazos y efectos</span></CheckRow>
                </CheckList>
              </Panel>

              <Panel $h={166} $mb={2}>
                <TabBar>
                  <PTab $w={62} $on>Muestras</PTab>
                  <PTab $w={44}>Color</PTab>
                  <PTab $w={82}>Guía de color</PTab>
                  <Burger />
                </TabBar>
                <SwatchTop>
                  <FillStroke />
                  <ViewToggle>
                    <ViewBtn><I s={14} c="#c8c8c8"><path d="M1 2 H13 M1 5.5 H13 M1 9 H13 M1 12.5 H13" stroke="currentColor" strokeWidth="2" /></I></ViewBtn>
                    <ViewBtn $on><I s={14} c="#e8e8e8"><path d="M1 1 H4 V4 H1 Z M5.5 1 H8.5 V4 H5.5 Z M10 1 H13 V4 H10 Z M1 5.5 H4 V8.5 H1 Z M5.5 5.5 H8.5 V8.5 H5.5 Z M10 5.5 H13 V8.5 H10 Z M1 10 H4 V13 H1 Z M5.5 10 H8.5 V13 H5.5 Z M10 10 H13 V13 H10 Z" fill="currentColor" /></I></ViewBtn>
                  </ViewToggle>
                </SwatchTop>
                <SwatchBox>
                  <SwatchInner>
                    <SwatchLine>
                      <NoneCell $bg={NONE_BG2} />
                      <Cell $bg="#e8e8e8">
                        <I s={13} c="#555"><circle cx="6.5" cy="6.5" r="4.5" stroke="currentColor" /><circle cx="6.5" cy="6.5" r="2" stroke="currentColor" /><path d="M0 6.5 H13 M6.5 0 V13" stroke="currentColor" strokeWidth=".8" /></I>
                      </Cell>
                      {row1.map((c, i) => <Cell key={i} $bg={c} />)}
                    </SwatchLine>
                    <SwatchLine>
                      {row2.map((c, i) => <Cell key={i} $bg={c} />)}
                      <Cell $bg="#ff0080" $corner />
                    </SwatchLine>
                    <SwatchLine>
                      {row3.map((c, i) => <Cell key={i} $bg={c} />)}
                      {row3b.map((c, i) => <Cell key={i} $bg={c} />)}
                    </SwatchLine>
                    <SwatchLine>
                      {row4.map(([c, k], i) => <Cell key={i} $bg={c} $corner={k} />)}
                    </SwatchLine>
                    <SwatchLine $mt={2} $pl={14}>
                      <FolderAt><I s={12} h={10} c="#c4c4c4"><path d="M0 1 H4 L5 2.5 H12 V10 H0 Z" fill="currentColor" /></I></FolderAt>
                      {grays.map((c) => <Cell key={c} $bg={c} />)}
                    </SwatchLine>
                    <SwatchLine $mt={2} $pl={14}>
                      {tiny.map((c) => <Tiny key={c} $bg={c} />)}
                    </SwatchLine>
                  </SwatchInner>
                  <SwatchScroll>
                    <Chev c="#a8a8a8" up />
                    <SwatchThumb />
                    <Chev c="#a8a8a8" />
                  </SwatchScroll>
                </SwatchBox>
                <IconStrip $h={20}>
                  <Slot $w={24}><I s={16} c="#c8c8c8"><path d="M1 2 H3 V14 H1 Z M5 2 H7 V14 H5 Z M9 2 L11 1.5 L14 13 L12 14 Z" fill="currentColor" /></I></Slot>
                  <Slot $w={26}><I s={14} c="#c8c8c8"><circle cx="7" cy="7" r="3" stroke="currentColor" strokeWidth="1.5" /><path d="M1 2 L5 5 M13 2 L9 5 M1 12 L5 9 M13 12 L9 9" stroke="currentColor" strokeWidth="1.4" /></I></Slot>
                  <Slot $w={26}><I s={16} c="#c8c8c8"><path d="M4 1 H15 V12 M12 4 H1" stroke="currentColor" strokeWidth="1.2" /><path d="M4 4 H12 V14 H4 Z" stroke="currentColor" strokeWidth="1.2" /><path d="M1 9 H9 M6 6 L9 9 L6 12" stroke="currentColor" strokeWidth="1.6" /></I></Slot>
                  <Gap $w={17} />
                  <Slot $w={24}><I s={13} c="#c8c8c8"><path d="M1 1 H4 V4 H1 Z M5 1 H8 V4 H5 Z M9 1 H12 V4 H9 Z M1 5 H4 V8 H1 Z M5 5 H8 V8 H5 Z M9 5 H12 V8 H9 Z M1 9 H4 V12 H1 Z M5 9 H8 V12 H5 Z M9 9 H12 V12 H9 Z" fill="currentColor" /></I></Slot>
                  <Gap $w={3} />
                  <Slot $w={24}><I s={13} c="#6e6e6e"><rect x="1" y="1" width="11" height="11" stroke="currentColor" /><path d="M3 4 H10 M3 6.5 H10 M3 9 H10" stroke="currentColor" /></I></Slot>
                  <Gap $w={2} />
                  <Slot $w={24}><I s={14} h={11} c="#c8c8c8"><path d="M0 1 H5 L6 3 H14 V11 H0 Z" fill="currentColor" /></I></Slot>
                  <Gap $w={3} />
                  <Slot $w={24}><I s={12} c="#6e6e6e"><rect x="1" y="1" width="10" height="10" stroke="currentColor" /><path d="M6 3 V9 M3 6 H9" stroke="currentColor" /></I></Slot>
                  <Gap $w={1} />
                  <Slot $w={24}><I s={12} c="#6e6e6e"><path d="M1 3 H11 M4 1 H8 M2.5 3 V11.5 H9.5 V3 M5 5 V10 M7 5 V10" stroke="currentColor" /></I></Slot>
                </IconStrip>
              </Panel>

              <Panel $h={28} $mb={3}>
                <TabBar>
                  <PTab $w={50} $on $left><UpDown />Trazo</PTab>
                  <Burger />
                </TabBar>
              </Panel>

              <Panel $h={167}>
                <TabBar>
                  <PTab $w={96} $on>Mesas de trabajo</PTab>
                  <PTab $w={69}>Bibliotecas</PTab>
                  <Burger />
                </TabBar>
                <BoardTable>
                  <BoardHead>
                    <BoardCol $w={41} $big>1</BoardCol>
                    <BoardCol $w={157}>Mesa de trabajo 1</BoardCol>
                    <BoardCol $w={40}><I s={16} h={13} c="#c8c8c8"><path d="M5 4 H11 L15 8 V12.5 H5 Z" stroke="currentColor" /><path d="M0 3 H3 M3 0 V2" stroke="currentColor" /></I></BoardCol>
                  </BoardHead>
                </BoardTable>
                <IconStrip $h={19}>
                  <Slot $w={24}><I s={14} c="#6e6e6e"><path d="M1 2 H6 L11 11 H14 M1 11 H6 L8 8 M9 4 L11 2 H14" stroke="currentColor" strokeWidth="1.6" /></I></Slot>
                  <Gap $w={95} />
                  <Slot $w={24}><I s={12} c="#6e6e6e"><path d="M6 1 L11 6 H8.5 V11 H3.5 V6 H1 Z" fill="currentColor" /></I></Slot>
                  <Gap $w={2} />
                  <Slot $w={24}><I s={12} c="#6e6e6e"><path d="M6 11 L11 6 H8.5 V1 H3.5 V6 H1 Z" fill="currentColor" /></I></Slot>
                  <Gap $w={3} />
                  <Slot $w={24}><I s={12} c="#d0d0d0"><rect x=".5" y=".5" width="11" height="11" stroke="currentColor" /><path d="M6 3 V9 M3 6 H9" stroke="currentColor" /></I></Slot>
                  <Gap $w={1} />
                  <Slot $w={24}><I s={12} c="#6e6e6e"><path d="M1 3 H11 M4 1 H8 M2.5 3 V11.5 H9.5 V3 M5 5 V10 M7 5 V10" stroke="currentColor" /></I></Slot>
                </IconStrip>
              </Panel>
            </PanelsCol>
          </DockBody>
        </Dock>
      </Workspace>

      <Bottom><BottomCut /><Glow /><BottomEdge /></Bottom>

      <ToolPanel>
        <ToolHead><span>▶▶</span><I s={8} c="#cfcfcf"><path d="M1 1 L7 7 M7 1 L1 7" stroke="currentColor" strokeWidth="2" /></I></ToolHead>
        <ToolGrip />
        {toolIcons.map((t, i) => <ToolBtn key={i} $on={t.on} $corner={t.corner}>{t.el}</ToolBtn>)}
        <ToolSep />
        <DefaultRow>
          <I s={12} c="#fff"><rect x="4" y="4" width="7" height="7" fill="#000" stroke="#fff" /><rect x="1" y="1" width="7" height="7" fill="#fff" stroke="#000" /></I>
          <I s={12} c="#b8b8b8"><path d="M4 3 H7 C10 3 11 6 11 11" stroke="currentColor" strokeWidth="2" /><path d="M1 3 L5 0 L5 6 Z M8 9 L14 9 L11 12 Z" fill="currentColor" /></I>
        </DefaultRow>
        <FSWrap><FillStroke /></FSWrap>
        <MiniRow>
          <MiniCell $bg="#733018" />
          <MiniCell $bg="linear-gradient(to right,#fff,#222)" />
          <MiniCell $bg={NONE_BG2} />
        </MiniRow>
        <ToolFoot $mt={8}><I s={14} c="#b0b0b0"><circle cx="6" cy="6" r="4.5" stroke="currentColor" /><rect x="6" y="6" width="7" height="7" fill="currentColor" /></I></ToolFoot>
        <ToolFoot $mt={11}><I s={20} h={14} c="#b8b8b8"><rect x="6" y="0.5" width="13" height="8" fill="#8a8a8a" stroke="currentColor" /><rect x="1" y="4.5" width="11" height="8.5" fill="#535353" stroke="currentColor" /></I></ToolFoot>
        <ToolFoot $mt={22}><I s={16} h={6} c="#b8b8b8"><circle cx="3" cy="3" r="1.8" fill="currentColor" /><circle cx="8" cy="3" r="1.8" fill="currentColor" /><circle cx="13" cy="3" r="1.8" fill="currentColor" /></I></ToolFoot>
      </ToolPanel>

      <Overlay />
    </Screen>
  );
}

const OverlaySvg = styled.svg`
  position: absolute; left: 0; top: 0; pointer-events: none;
`;
const RedBox = styled.div`
  position: absolute; left: 4px; top: 180px; width: 43px; height: 42px; border: 3px solid #f00; pointer-events: none;
`;
const T = "#009a9a";
function Overlay() {
  const curve = "M279 485 C279 408 358 329 455.6 328.5 C554 328 647 409 647 486 C647 550 560 608 456 608 C350 608 279 550 279 485 Z";
  return (
    <>
      <OverlaySvg width={1279} height={772} viewBox="0 0 1279 772">
        <path d={curve} stroke="#0a3055" strokeWidth="8" fill="none" />
        <path d={curve} stroke={T} strokeWidth="0.8" fill="none" />
        <path d="M358 329.5 H554 M279.5 408 V485 M647.5 409 V486" stroke={T} strokeWidth="1" />
        <circle cx="358" cy="329" r="2.6" fill={T} />
        <circle cx="554" cy="329" r="2.6" fill={T} />
        <circle cx="279" cy="408" r="2.6" fill={T} />
        <circle cx="647" cy="409" r="2.6" fill={T} />
        <rect x="453" y="326" width="5" height="5" fill={T} />
        <rect x="277.5" y="483.5" width="4" height="4" fill="#fff" stroke={T} />
        <rect x="645.5" y="484.5" width="4" height="4" fill="#fff" stroke={T} />
        <rect x="454.5" y="606.5" width="4" height="4" fill="#fff" stroke={T} />
        <rect x="461.5" y="466.5" width="3" height="3" fill="#ccc" stroke={T} />
        <path d="M47 202 L440 318" stroke="#f00" strokeWidth="3" />
        <path d="M450 321 L436 323 L439 311 Z" fill="#f00" />
        <path d="M47 202 L268 480" stroke="#f00" strokeWidth="3" />
        <path d="M273 488 L261 480 L271 472 Z" fill="#f00" />
      </OverlaySvg>
      <RedBox />
    </>
  );
}
